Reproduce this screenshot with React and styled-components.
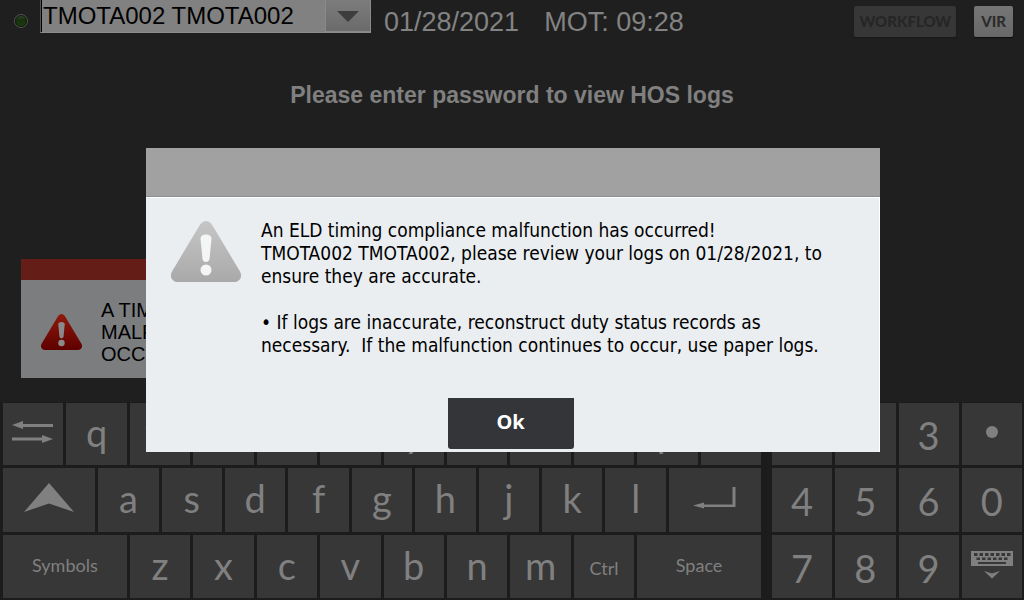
import React from 'react';
import styled, { createGlobalStyle } from 'styled-components';

const GlobalStyle = createGlobalStyle`
  *, *::before, *::after { box-sizing: border-box; }
  body {
    margin: 0;
    background: #1f1f1f;
    font-family: "Liberation Sans", Arial, sans-serif;
  }
  button, select { font: inherit; margin: 0; }
`;

const Page = styled.div`
  min-height: 100vh;
  display: flex;
  flex-direction: column;
  overflow: hidden;
`;

const TopBar = styled.header`
  display: flex;
  align-items: flex-start;
  height: 40px;
  padding: 0 11px 0 13px;
  color: #838383;
`;

const StatusLight = styled.svg`
  width: 16px;
  height: 16px;
  margin: 13px 11px 0 0;
  flex: none;
`;

const DriverPicker = styled.label`
  display: grid;
  grid-template-columns: 1fr 46px;
  width: 331px;
  height: 33px;
  flex: none;
  background: #818181;
  border-left: 1px solid #555;
  border-bottom: 1px solid #8c8c8c;
  box-shadow: inset 1px 0 0 #000;
`;

const DriverSelect = styled.select`
  grid-area: 1 / 1 / 2 / 3;
  appearance: none;
  border: 0;
  padding: 0 46px 0 2px;
  background: transparent;
  color: #000;
  font-size: 24px;
  line-height: 32px;
  height: 32px;
`;

const PickerArrow = styled.span`
  grid-area: 1 / 2;
  display: flex;
  align-items: center;
  justify-content: center;
  padding-top: 2px;
  background: linear-gradient(#7c7c7c, #6b6b6b);
  border: 1px solid #8a8a8a;
  border-top: 0;
  pointer-events: none;
`;

const Clock = styled.div`
  display: flex;
  gap: 25px;
  margin-left: 13px;
  padding-top: 7px;
  font-size: 27px;
  line-height: 31px;
  white-space: nowrap;
`;

const Actions = styled.div`
  display: flex;
  gap: 18px;
  margin-left: auto;
  padding-top: 6px;
`;

const ActionButton = styled.button`
  height: 31px;
  padding: 0 ${(p) => (p.disabled ? 5 : 7)}px;
  border: 0;
  border-radius: 2px;
  font-family: Lato, sans-serif;
  font-size: 15px;
  font-weight: 900;
  line-height: 31px;
  color: ${(p) => (p.disabled ? '#262626' : '#2c2c2c')};
  background: ${(p) => (p.disabled ? '#373737' : 'linear-gradient(#767676, #686868)')};
  box-shadow: 0 1px 1px ${(p) => (p.disabled ? '#191919' : '#0c0c0c')};
`;

const Prompt = styled.h1`
  margin: 41px 0 0;
  text-align: center;
  font-size: 23px;
  line-height: 28px;
  font-weight: 700;
  color: #808080;
`;

const Notice = styled.section`
  width: 400px;
  margin: 150px 0 20px 21px;
  border-top: 21px solid #651d18;
  background: #7c7d7f;
  display: flex;
  align-items: center;
  height: 119px;
  padding: 5px 20px 0;
  gap: 19px;
`;

const NoticeText = styled.p`
  margin: 0;
  font-size: 20px;
  line-height: 22px;
  color: #000;
`;

const KeyboardPanel = styled.div`
  display: flex;
  gap: 11px;
  margin-top: auto;
  padding: 1px 2px 2px 3px;
  background: #1c1c1c;
`;

const LetterPad = styled.div`
  flex: 758 1 0;
  display: grid;
  grid-template-columns: repeat(24, minmax(0, 1fr));
  grid-template-rows: 62px 64px 63px;
  gap: 3px;
`;

const NumberPad = styled.div`
  flex: 250 1 0;
  display: grid;
  grid-template-columns: repeat(4, minmax(0, 1fr));
  grid-template-rows: 62px 64px 63px;
  gap: 3px;
`;

const Key = styled.button`
  grid-column: span ${(p) => p.$span || 1};
  display: flex;
  align-items: center;
  justify-content: center;
  padding: ${(p) => (p.$digit ? 2 : 0)}px 0 ${(p) => (p.$digit ? 0 : 4)}px;
  border: 0;
  background: #373737;
  color: #808080;
  font-family: Lato, sans-serif;
  font-size: ${(p) => (p.$small ? 18 : 38)}px;
  line-height: 44px;
`;

const Overlay = styled.div`
  position: fixed;
  inset: 0;
  display: grid;
  place-items: center;
  padding-left: 2px;
`;

const Dialog = styled.section`
  width: 72%;
  min-width: 640px;
  max-width: 734px;
  background: #eaeef1;
  display: flex;
  flex-direction: column;
  border-right: 1px solid #fff;
`;

const DialogHeader = styled.div`
  height: 50px;
  margin-right: -1px;
  background: #a1a1a1;
  border-bottom: 1px solid #fff;
  box-shadow: inset 0 -1px 0 #8e8e8e;
`;

const DialogBody = styled.div`
  display: flex;
  align-items: flex-start;
  gap: 20px;
  padding: 21px 40px 0 25px;

  > svg { margin-top: 2px; }
`;

const Message = styled.div`
  font-family: "DejaVu Sans Condensed", "DejaVu Sans", sans-serif;
  font-size: 19px;
  line-height: 23px;
  color: #000;
`;

const Paragraph = styled.p`
  margin: 0 0 23px;
  white-space: pre;
`;

const OkButton = styled.button`
  align-self: center;
  width: 126px;
  height: 51px;
  margin: 18px 4px 3px 0;
  padding: 0 0 4px;
  border: 0;
  border-radius: 0 0 3px 3px;
  background: #343539;
  color: #fff;
  font-family: "Noto Sans", sans-serif;
  font-size: 20px;
  font-weight: 700;
`;

const WarningSvg = styled.svg`
  flex: none;
`;

function WarningIcon({ id, width, height, top, bottom, mark }) {
  return (
    <WarningSvg width={width} height={height} viewBox="0 0 70 61" preserveAspectRatio="none" aria-hidden="true">
      <defs>
        <linearGradient id={id} x1="0" y1="0" x2="0" y2="1">
          <stop offset="0" stopColor={top} />
          <stop offset="1" stopColor={bottom} />
        </linearGradient>
      </defs>
      <path
        d="M28.500 4.500C32 -1.500 38 -1.500 41.500 4.500L69 50.500C72 56 68.500 61 63 61H7C1.500 61 -2 56 1 50.500Z"
        fill={`url(#${id})`}
      />
      <path d="M29.500 17.500C29.500 12 40.500 12 40.500 17.500L38.500 38C38 42 32 42 31.500 38Z" fill={mark} />
      <circle cx="35" cy="49" r="5.500" fill={mark} />
    </WarningSvg>
  );
}

function SwapIcon() {
  return (
    <svg width="42" height="24" viewBox="0 0 42 24" fill="#808080" aria-hidden="true">
      <path d="M0 5L11 1V4H41V7H11V9Z" />
      <path d="M41 19L30 15V17.500H0V20.500H30V23Z" />
    </svg>
  );
}

function ShiftIcon() {
  return (
    <svg width="50" height="30" viewBox="0 0 50 30" fill="#808080" aria-hidden="true">
      <path d="M25 0L50 29L25 20.500L0 29Z" />
    </svg>
  );
}

function EnterIcon() {
  return (
    <svg width="43" height="22" viewBox="0 0 43 22" fill="#808080" aria-hidden="true">
      <path d="M0 18.500L11 15.500V17.500H39.500V0H42.500V20H11V21.500Z" />
    </svg>
  );
}

function BackspaceIcon() {
  return (
    <svg width="40" height="10" viewBox="0 0 40 10" fill="#808080" aria-hidden="true">
      <path d="M0 5L11 1V4H40V6H11V9Z" />
    </svg>
  );
}

function HideKeyboardIcon() {
  const top = [3, 8.5, 14, 19.5, 25, 30.5, 36];
  const mid = [5.5, 11, 16.5, 22, 27.5, 33];
  return (
    <svg width="42" height="28" viewBox="0 0 42 28" aria-hidden="true">
      <rect width="42" height="15" fill="#808080" />
      <g fill="#373737">
        {top.map((x) => <rect key={x} x={x} y="2" width="3.500" height="3" />)}
        {mid.map((x) => <rect key={x} x={x} y="6.500" width="3.500" height="2.500" />)}
        <rect x="7" y="11" width="28" height="2" />
      </g>
      <path d="M13 20L21 22.500L29 20L21 27.500Z" fill="#808080" />
    </svg>
  );
}

const letters = (row) => row.split('').map((c) => <Key key={c} $span={2}>{c}</Key>);
const digits = (row) => row.split('').map((c) => <Key key={c} $digit>{c}</Key>);

export default function App() {
  return (
    <>
      <GlobalStyle />
      <Page>
        <TopBar>
          <StatusLight viewBox="0 0 16 16" aria-hidden="true">
            <defs>
              <linearGradient id="led" x1="0" y1="0" x2="0" y2="1">
                <stop offset="0" stopColor="#3b5136" />
                <stop offset="0.4" stopColor="#17310f" />
                <stop offset="1" stopColor="#1b3e10" />
              </linearGradient>
            </defs>
            <circle cx="8" cy="8" r="6.500" fill="url(#led)" stroke="#50534f" />
            <circle cx="8" cy="8" r="5.500" fill="none" stroke="#151a13" />
          </StatusLight>
          <DriverPicker>
            <DriverSelect aria-label="Driver" defaultValue="TMOTA002">
              <option value="TMOTA002">TMOTA002 TMOTA002</option>
            </DriverSelect>
            <PickerArrow>
              <svg width="22" height="11" viewBox="0 0 22 11" aria-hidden="true">
                <path d="M0 0H22L11 11Z" fill="#3d3d3d" />
              </svg>
            </PickerArrow>
          </DriverPicker>
          <Clock>
            <span>01/28/2021</span>
            <span>MOT: 09:28</span>
          </Clock>
          <Actions>
            <ActionButton disabled>WORKFLOW</ActionButton>
            <ActionButton>VIR</ActionButton>
          </Actions>
        </TopBar>

        <Prompt>Please enter password to view HOS logs</Prompt>

        <Notice>
          <WarningIcon id="warn-red" width="41" height="36" top="#8e1a0c" bottom="#5e0000" mark="#8a8a8a" />
          <NoticeText>
            A TIMING<br />MALFUNCTION<br />OCCURRED
          </NoticeText>
        </Notice>

        <KeyboardPanel>
          <LetterPad>
            <Key $span={2} aria-label="Switch field"><SwapIcon /></Key>
            {letters('qwertyuiop')}
            <Key $span={2} aria-label="Backspace"><BackspaceIcon /></Key>
            <Key $span={3} aria-label="Shift"><ShiftIcon /></Key>
            {letters('asdfghjkl')}
            <Key $span={3} aria-label="Enter"><EnterIcon /></Key>
            <Key $span={4} $small>Symbols</Key>
            {letters('zxcvbnm')}
            <Key $span={2} $small $digit>Ctrl</Key>
            <Key $span={4} $small>Space</Key>
          </LetterPad>
          <NumberPad>
            {digits('123')}
            <Key aria-label="Point">
              <svg width="12" height="12" viewBox="0 0 12 12" aria-hidden="true">
                <circle cx="6" cy="6" r="6" fill="#808080" />
              </svg>
            </Key>
            {digits('4560789')}
            <Key aria-label="Hide keyboard"><HideKeyboardIcon /></Key>
          </NumberPad>
        </KeyboardPanel>
      </Page>

      <Overlay>
        <Dialog role="alertdialog" aria-modal="true" aria-label="Malfunction" aria-describedby="dialog-message">
          <DialogHeader />
          <DialogBody>
            <WarningIcon id="warn-grey" width="70" height="61" top="#c6c6c6" bottom="#a9a9a9" mark="#f3f5f6" />
            <Message id="dialog-message">
              <Paragraph>
                {'An ELD timing compliance malfunction has occurred!\nTMOTA002 TMOTA002, please review your logs on 01/28/2021, to\nensure they are accurate.'}
              </Paragraph>
              <Paragraph>
                {'• If logs are inaccurate, reconstruct duty status records as\nnecessary.  If the malfunction continues to occur, use paper logs.'}
              </Paragraph>
            </Message>
          </DialogBody>
          <OkButton>Ok</OkButton>
        </Dialog>
      </Overlay>
    </>
  );
}
